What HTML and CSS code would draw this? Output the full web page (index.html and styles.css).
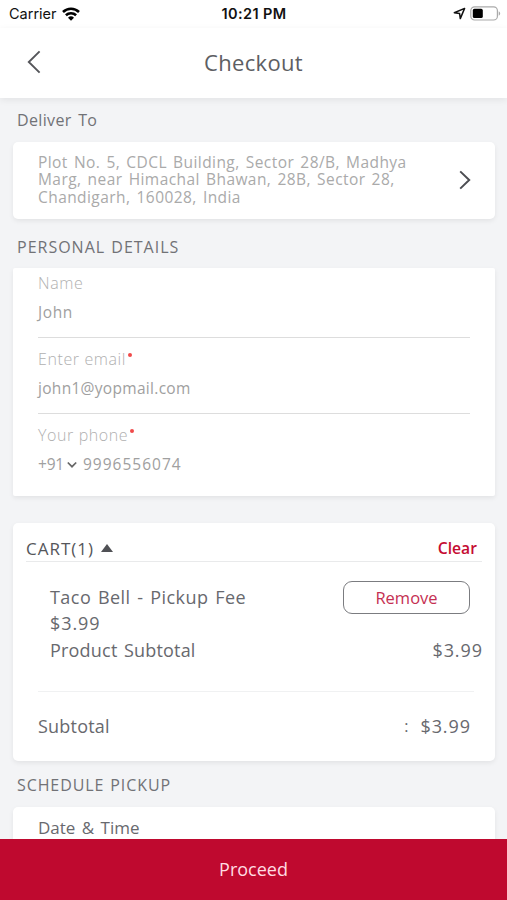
FILE: index.html
```html
<!DOCTYPE html>
<html lang="en">
<head>
<meta charset="utf-8">
<title>Checkout</title>
<link rel="stylesheet" href="styles.css">
</head>
<body>
<div class="screen">
  <div class="status">
    <div class="status-left">
      <span class="carrier">Carrier</span>
      <svg class="wifi" width="18" height="14" viewBox="0 0 18 14" fill="none" stroke="#000" stroke-width="2.6"><path d="M1 5a11.6 11.6 0 0 1 16 0"/><path d="M3.9 8.3a7.4 7.4 0 0 1 10.2 0"/><path d="M9 13.7 6 10.7a4.3 4.3 0 0 1 6 0Z" fill="#000" stroke="none"/></svg>
    </div>
    <span class="clock">10:21 PM</span>
    <div class="status-right">
      <svg width="13" height="13" viewBox="0 0 13 13" fill="none" stroke="#111" stroke-width="1.5" stroke-linejoin="round"><path d="M11.6 1.4 1.3 5.7 6.6 6.5 7.3 11.6Z"/></svg>
      <svg width="31" height="15" viewBox="0 0 31 15"><rect x=".8" y=".8" width="26.6" height="13.2" rx="3.8" fill="#fff" stroke="#aaa" stroke-width="1.2"/><rect x="2.8" y="2.8" width="10" height="9.2" rx="1.6"/><path d="M28.7 5.2c2 1 2 3.6 0 4.6Z" fill="#aaa"/></svg>
    </div>
  </div>
  <header class="header">
    <svg class="back" width="14" height="24" viewBox="0 0 14 24" fill="none" stroke="#55565a" stroke-width="1.9"><path d="M12.6 1.4 1.8 12 12.6 22.6"/></svg>
    <h1>Checkout</h1>
  </header>
  <main class="content">
    <h2 class="label deliver">Deliver To</h2>
    <section class="card address">
      <p>Plot No. 5, CDCL Building, Sector 28/B, Madhya<br>Marg, near Himachal Bhawan, 28B, Sector 28,<br>Chandigarh, 160028, India</p>
      <svg width="12" height="20" viewBox="0 0 12 20" fill="none" stroke="#4c4d52" stroke-width="2"><path d="M1.2 1.4 10.2 10 1.2 18.6"/></svg>
    </section>
    <h2 class="label personal">PERSONAL DETAILS</h2>
    <section class="card details">
      <div class="field"><div class="caption"><span>Name</span></div><div class="value"><span class="name">John</span></div></div>
      <div class="field"><div class="caption"><span>Enter email</span><i></i></div><div class="value"><span class="email">john1@yopmail.com</span></div></div>
      <div class="field"><div class="caption"><span>Your phone</span><i></i></div><div class="value"><span class="code">+91</span><svg width="10" height="8" viewBox="0 0 10 8" fill="none" stroke="#666" stroke-width="1.7"><path d="M.8 1.5 5 5.7 9.2 1.5"/></svg><span class="phone">9996556074</span></div></div>
    </section>
    <section class="card cart">
      <div class="cart-head"><span class="cart-title">CART(1)</span><svg width="12" height="8" viewBox="0 0 12 8"><path d="M6 0 12 8H0Z" fill="#505155"/></svg><span class="clear">Clear</span></div>
      <div class="item"><span class="item-name">Taco Bell - Pickup Fee</span><button class="remove">Remove</button></div>
      <div class="price">$3.99</div>
      <div class="product"><span class="row-name">Product Subtotal</span><span class="price">$3.99</span></div>
      <div class="subtotal"><span class="row-name">Subtotal</span><span class="colon">:</span><span class="price">$3.99</span></div>
    </section>
    <h2 class="label schedule">SCHEDULE PICKUP</h2>
    <section class="card date"><span>Date &amp; Time</span></section>
  </main>
  <footer class="proceed">Proceed</footer>
</div>
</body>
</html>
```
FILE: styles.css
```css
* { box-sizing: border-box; }
body { margin: 0; background: #f3f4f6; font-family: "Open Sans", "Noto Sans", sans-serif; color: #68696e; }
h1, h2, p { margin: 0; font-weight: 400; }
svg { display: block; flex: none; }
.screen { width: 507px; height: 900px; display: flex; flex-direction: column; overflow: hidden; }
.status { height: 28px; background: #fff; display: grid; grid-template-columns: 1fr auto 1fr; align-items: center; padding: 0 6px 1px 9px; font-family: Inter, sans-serif; font-size: 14.5px; color: #111; flex: none; }
.status-left, .status-right { display: flex; align-items: center; }
.status-left { gap: 5px; }
.status-right { justify-content: flex-end; gap: 4px; }
.clock { font-weight: 600; letter-spacing: .4px; margin-right: 2px; }
.header { height: 70px; flex: none; background: #fff; display: grid; grid-template-columns: 27px 1fr 27px; align-items: center; padding: 0 0 2px; box-shadow: 0 2px 7px rgba(0,0,0,.07); }
.back { margin-left: 27px; }
h1 { font-size: 22px; text-align: center; letter-spacing: .3px; line-height: 30px; color: #5d5e63; }
.content { flex: 1; min-height: 0; overflow: hidden; padding: 0 12px 0 13px; }
.label { font-size: 16px; line-height: 24px; padding-left: 4px; white-space: nowrap; color: #717276; }
.deliver { margin-top: 10px; margin-bottom: 10px; letter-spacing: .35px; word-spacing: 2px; }
.card { background: #fff; border-radius: 5px; box-shadow: 0 2px 5px rgba(0,0,0,.07); }
.address { height: 77px; display: flex; align-items: center; justify-content: space-between; padding: 0 24px 1px 25px; color: #aaa; font-size: 15.5px; line-height: 17.4px; white-space: nowrap; letter-spacing: .43px; word-spacing: 1.7px; }
.personal { margin: 16px 0 9px; letter-spacing: 1px; word-spacing: 1px; }
.details { height: 228px; padding: 3px 25px 0; border-radius: 2px; }
.field:not(:last-child) { height: 67px; border-bottom: 1px solid #ddd; margin-bottom: 9px; }
.caption, .value { display: flex; height: 24px; line-height: 24px; font-size: 16px; font-weight: 300; color: #b0b0b0; white-space: nowrap; letter-spacing: .6px; }
.value { margin-top: 5px; font-size: 15.5px; color: #a0a0a0; font-weight: 400; align-items: center; }
.email { letter-spacing: .3px; }
.code { letter-spacing: -.2px; }
.phone { letter-spacing: 1px; }
.caption i { width: 4px; height: 4px; border-radius: 2px; background: #f04a4a; margin: 6px 0 0 2px; }
.value svg { margin: 1px 6px 0 3px; }
.cart { height: 238px; margin-top: 27px; padding-right: 13px; font-size: 18px; line-height: 27px; }
.cart span { white-space: nowrap; }
.cart-head { height: 39px; margin-left: 13px; padding: 12px 5px 0 0; display: flex; align-items: center; border-bottom: 1px solid #e9eaeb; font-size: 17px; color: #55565a; }
.cart-title { letter-spacing: 1px; }
.cart-head svg { margin-left: 7px; }
.clear { margin-left: auto; color: #c50b32; font-weight: 600; font-size: 15.7px; }
.item { display: flex; align-items: center; justify-content: space-between; margin: 19px 12px 0 37px; height: 33px; }
.item-name { letter-spacing: .45px; word-spacing: 1.6px; }
.remove { width: 127px; height: 33px; border: 1.4px solid #7b7c80; border-radius: 9px; background: #fff; color: #c52f52; font: 16.5px "Open Sans", sans-serif; padding: 0 0 1px; }
.price { letter-spacing: .9px; margin-right: -.9px; }
.cart > .price { margin: -4px 0 0 37px; }
.product { margin: 0 0 0 37px; display: flex; justify-content: space-between; }
.row-name { letter-spacing: .2px; word-spacing: 1.5px; }
.subtotal { margin: 27px 8px 0 25px; border-top: 1px solid #f0f1f2; display: flex; padding: 21px 4px 0 0; }
.colon { margin-left: auto; margin-right: 12px; font-size: 16px; }
.schedule { margin: 12px 0 10px; letter-spacing: .9px; word-spacing: 1px; }
.date { height: 80px; padding: 9px 25px; font-size: 17px; line-height: 24px; word-spacing: 2px; }
.proceed { height: 61px; flex: none; background: #bf092f; color: #ffdce2; font-size: 18px; line-height: 60px; text-align: center; }
```
